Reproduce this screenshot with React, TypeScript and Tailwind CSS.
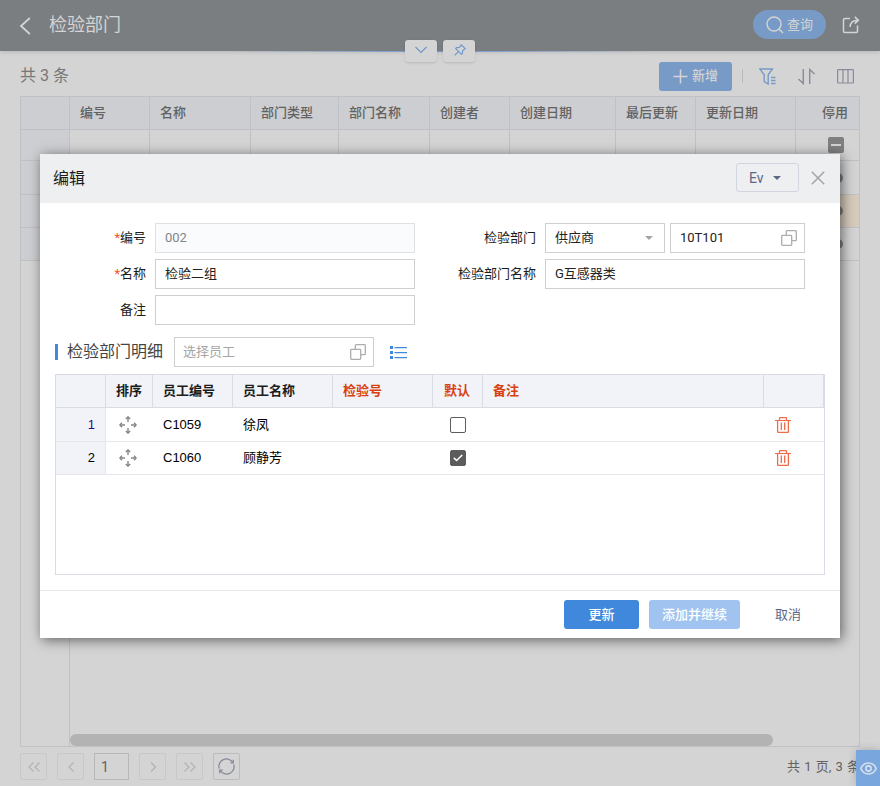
import type { ReactNode } from "react";
import clsx from "clsx";

interface IIconProps {
  className?: string;
}

const listColumns = [
  { title: "", width: "w-[49px]" },
  { title: "编号", width: "w-[80px]" },
  { title: "名称", width: "w-[101px]" },
  { title: "部门类型", width: "w-[88px]" },
  { title: "部门名称", width: "w-[91px]" },
  { title: "创建者", width: "w-[80px]" },
  { title: "创建日期", width: "w-[106px]" },
  { title: "最后更新", width: "w-[80px]" },
  { title: "更新日期", width: "w-[100px]" },
  { title: "停用", width: "w-[63px]" },
];

const listRows = [
  { id: 1, height: "h-[34px]", active: false },
  { id: 2, height: "h-[33px]", active: true },
  { id: 3, height: "h-[33px]", active: false },
];

const employees = [
  { no: 1, code: "C1059", name: "徐凤", checked: false },
  { no: 2, code: "C1060", name: "顾静芳", checked: true },
];

function CopyIcon({ className }: IIconProps) {
  return (
    <svg viewBox="0 0 16 16" fill="none" stroke="#adadad" strokeWidth="1.3" className={clsx("size-4 shrink-0", className)}>
      <rect x="0.7" y="5.3" width="10" height="10" rx="0.8" />
      <path d="M5.3 5V1.5a.8.8 0 0 1 .8-.8h8.4a.8.8 0 0 1 .8.8v8.4a.8.8 0 0 1-.8.8H11" />
    </svg>
  );
}

function TrashIcon() {
  return (
    <svg viewBox="0 0 16 16" fill="none" stroke="#ee6c4b" className="size-4">
      <path d="M0 3.5h16" strokeWidth="1.1" />
      <path d="M4.5 3.5V1.2Q4.5 .6 5.1 .6h5.8q.6 0 .6.6v2.3" strokeWidth="1.2" />
      <path d="M2.6 3.5v11.2q0 .7.7.7h9.4q.7 0 .7-.7V3.5" strokeWidth="1.3" />
      <path d="M6.3 5.5V13M9.7 5.5V13" strokeWidth="1.3" />
    </svg>
  );
}

function MoveIcon() {
  return (
    <svg viewBox="0 0 18 18" fill="none" stroke="#858585" strokeWidth="1.4" className="size-[18px]">
      <path d="M9 1v5M9 12v5M1 9h5M12 9h5" />
      <path d="M6.8 3 9 .9 11.2 3M6.8 15 9 17.1 11.2 15M3 6.8.9 9 3 11.2M15 6.8 17.1 9 15 11.2" />
    </svg>
  );
}

function Checkbox({ checked }: { checked: boolean }) {
  return (
    <span
      className={clsx(
        "flex size-4 items-center justify-center rounded-[2px] border-[1.5px] border-[#5c5c5c]",
        checked ? "bg-[#5c5c5c]" : "bg-white",
      )}
    >
      {checked && (
        <svg viewBox="0 0 10 8" fill="none" stroke="white" strokeWidth="1.6" className="h-2 w-2.5 shrink-0">
          <path d="M.8 3.8 3.6 6.5 9.2 1" />
        </svg>
      )}
    </span>
  );
}

function Field({ label, required, children }: { label: string; required?: boolean; children: ReactNode }) {
  return (
    <div className="flex h-[30px] items-center">
      <label className="w-[82px] text-right text-[13px] text-[#1c1c1c]">
        {required && <span className="text-[#f5512a]">*</span>}
        {label}
      </label>
      <div className="ml-[9px] flex gap-[5px]">{children}</div>
    </div>
  );
}

function Input({ value, width = "w-[260px]", disabled, children }: { value?: string; width?: string; disabled?: boolean; children?: ReactNode }) {
  return (
    <div
      className={clsx(
        "flex h-[30px] items-center justify-between border pr-[7px] pl-[9px] text-[13px]",
        width,
        disabled ? "border-[#dfe1e5] bg-[#fafbfd] text-[#858585]" : "border-[#cfcfcf] bg-white text-[#222]",
      )}
    >
      <span>{value}</span>
      {children}
    </div>
  );
}

function PageButton({ children }: { children: ReactNode }) {
  return (
    <button className="mr-[10px] flex size-[27px] items-center justify-center rounded-[2px] border border-[#c7c8ca] text-[#b1b3b6]">
      <svg viewBox="0 0 14 14" fill="none" stroke="currentColor" strokeWidth="1.3" className="size-3.5">
        {children}
      </svg>
    </button>
  );
}

function PageHeader() {
  return (
    <header className="relative flex h-[51px] items-center bg-[#7a7e81] pr-5 pl-[19px] shadow-[0_1px_4px_rgba(0,0,0,0.15)]">
      <svg viewBox="0 0 12 18" fill="none" stroke="#d4d4d4" strokeWidth="1.8" className="h-[18px] w-3">
        <path d="M10.8 1 2 9l8.800 8" />
      </svg>
      <h1 className="mb-[2px] ml-[18px] text-[18px] text-[#d4d4d4]">检验部门</h1>
      <button className="mb-[2px] ml-auto flex h-[29px] w-[73px] items-center rounded-full bg-[#779bc6] pl-[13px] text-[13px] text-[#d4d4d4]">
        <svg viewBox="0 0 18 18" fill="none" stroke="currentColor" strokeWidth="1.4" className="mr-[3px] size-[18px]">
          <circle cx="8" cy="8" r="7" />
          <path d="m13 13 4 4" />
        </svg>
        查询
      </button>
      <svg viewBox="0 0 18 18" fill="none" stroke="#d4d4d4" strokeWidth="1.5" className="mb-[1px] ml-4 size-[18px]">
        <path d="M8 2.5H2.800q-1.300 0-1.300 1.300v11.400q0 1.300 1.300 1.300h11.400q1.300 0 1.300-1.300V9.500" />
        <path d="M8 11c.3-4 2.500-6.800 8-6.800M12.800.900l3.600 3.300-3.600 3.400" />
      </svg>
      <div className="absolute inset-x-[220px] top-[51px] h-px bg-linear-to-r from-transparent via-[#6f98cc] to-transparent" />
      <div className="absolute top-10 left-[405px] flex gap-1.5">
        <button className="flex h-[22px] w-8 items-center justify-center rounded-[3px] bg-[#d4d4d4] text-[#6f98cc] shadow-sm">
          <svg viewBox="0 0 12 8" fill="none" stroke="currentColor" strokeWidth="1.2" className="mb-0.5 h-2 w-3">
            <path d="m.5 1 5.500 5.500L11.500 1" />
          </svg>
        </button>
        <button className="flex h-[22px] w-8 items-center justify-center rounded-[3px] bg-[#d4d4d4] text-[#6f98cc] shadow-sm">
          <svg viewBox="0 0 12 12" fill="none" stroke="currentColor" strokeWidth="1.2" strokeLinejoin="round" className="mb-0.5 ml-0.5 size-3">
            <path d="M7.300.8 11.200 4.700 10 5.400 8.600 6.800 8.400 9.600 7.400 10.300 1.700 4.600 2.400 3.600 5.200 3.400 6.600 2zM4.400 7.600.6 11.400" />
          </svg>
        </button>
      </div>
    </header>
  );
}

function Toolbar() {
  return (
    <div className="flex h-[45px] items-center pr-[26px] pl-5">
      <span className="mt-1 text-base text-[#777]">共 3 条</span>
      <button className="mt-[5px] ml-auto flex h-[29px] w-[73px] items-center rounded-[3px] bg-[#779bc6] pl-3.5 text-[13px] font-medium text-[#d4d4d4]">
        <svg viewBox="0 0 15 15" stroke="currentColor" strokeWidth="1.5" className="mr-1 size-[15px]">
          <path d="M7.5.5v14M.5 7.5h14" />
        </svg>
        新增
      </button>
      <span className="mt-[5px] ml-[10px] h-3.5 w-px bg-[#b8b9bb]" />
      <svg viewBox="0 0 17 17" fill="none" stroke="#779bc6" strokeWidth="1.4" className="mt-[5px] ml-4 size-[17px]">
        <path d="M.8 1h12.600L9.200 6.800v9.200L5.200 13.500V6.800z" />
        <path d="M12 9.500h4.500M12 12.500h4.500M12 15.500h4.500" />
      </svg>
      <svg viewBox="0 0 17 17" fill="none" stroke="#888c98" strokeWidth="1.4" className="mt-[5px] ml-[22px] size-[17px]">
        <path d="M5.300 1v14.500L.5 11M11.700 16V1.500l4.800 4.500" />
      </svg>
      <svg viewBox="0 0 17 15" fill="none" stroke="#888c98" strokeWidth="1.2" className="mt-[5px] ml-[22px] h-[15px] w-[17px]">
        <rect x=".6" y=".6" width="15.8" height="13.4" rx=".8" />
        <path d="M6 .5V14M11 .5V14" />
      </svg>
    </div>
  );
}

function DepartmentList() {
  return (
    <div className="mx-5 flex h-[651px] flex-col border border-[#c0c1c6]">
      <div className="flex h-[33px] shrink-0 border-b border-[#c0c1c6] bg-[#cdced1] text-[13px] font-medium text-[#626262]">
        {listColumns.map((col, index) => (
          <div
            key={index}
            className={clsx(
              "flex shrink-0 items-center border-[#c0c1c6]",
              col.width,
              col.title === "停用" ? "justify-end pr-[11px]" : "border-r pl-[10px]",
            )}
          >
            {col.title}
          </div>
        ))}
      </div>
      <div className="flex h-[31px] shrink-0 border-b border-[#c0c1c6]">
        {listColumns.map((col, index) => (
          <div
            key={index}
            className={clsx(
              "flex shrink-0 items-center justify-end border-[#c0c1c6]",
              col.width,
              index === 0 && "bg-[#cdced1]",
              index < 9 && "border-r",
            )}
          >
            {index === 9 && (
              <span className="mr-[15px] flex size-4 items-center justify-center rounded-[2px] bg-[#808080]">
                <span className="h-[1.5px] w-2.5 bg-[#d4d4d4]" />
              </span>
            )}
          </div>
        ))}
      </div>
      {listRows.map((row) => (
        <div key={row.id} className={clsx("flex shrink-0 border-b border-[#c0c1c6]", row.height, row.active && "bg-[#d6cbbc]")}>
          <div className="w-[49px] border-r border-[#c0c1c6] bg-[#cdced1]" />
          <div className="mr-4 ml-auto size-2.5 self-center rounded-full bg-[#808080]" />
        </div>
      ))}
      <div className="flex flex-1 items-end">
        <div className="w-[49px] self-stretch border-r border-[#c0c1c6]" />
        <div className="h-3 w-[703px] rounded-full bg-[#b3b3b3]" />
      </div>
    </div>
  );
}

function Pagination() {
  return (
    <footer className="flex h-[39px] items-center px-5 text-[13px] text-[#626262]">
      <PageButton>
        <path d="M6.500 2.500 2 7l4.500 4.500M12.500 2.500 8 7l4.500 4.500" />
      </PageButton>
      <PageButton>
        <path d="M9.500 2.500 5 7l4.500 4.500" />
      </PageButton>
      <div className="mr-[10px] flex h-[27px] w-[35px] items-center border border-[#b7b8ba] pl-1.5 text-sm">1</div>
      <PageButton>
        <path d="m5 2.500 4.500 4.500L5 11.500" />
      </PageButton>
      <PageButton>
        <path d="M1.500 2.500 6 7l-4.500 4.500M7.500 2.500 12 7l-4.500 4.500" />
      </PageButton>
      <button className="flex size-[27px] items-center justify-center rounded-[2px] border border-[#bbbcbe]">
        <svg viewBox="0 0 17 17" fill="none" stroke="#858b98" strokeWidth="1.3" className="size-[17px]">
          <path d="M1.200 10.500A7.500 7.500 0 0 1 14.800 4.500M15.800 6.500A7.500 7.500 0 0 1 2.200 12.500" />
          <path d="M15.300 1.800v3h-3M1.700 15.200v-3h3" />
        </svg>
      </button>
      <span className="ml-auto [word-spacing:1px]">共 1 页, 3 条</span>
    </footer>
  );
}

function DetailTable() {
  return (
    <div className="mx-[15px] mt-[7px] h-[201px] border border-[#d9dbe5]">
      <table className="w-full table-fixed border-separate border-spacing-0 font-['Liberation_Sans','Noto_Sans_CJK_SC',sans-serif] text-[13px]">
        <colgroup>
          <col className="w-[50px]" />
          <col className="w-[47px]" />
          <col className="w-[80px]" />
          <col className="w-[100px]" />
          <col className="w-[100px]" />
          <col className="w-[50px]" />
          <col className="w-[281px]" />
          <col className="w-[60px]" />
        </colgroup>
        <thead>
          <tr className="h-[33px] bg-[#f2f3f8] text-left text-[#1c1c1c] *:border-r *:border-b *:border-[#d9dbe5] *:pl-[10px] *:font-bold">
            <th />
            <th>排序</th>
            <th>员工编号</th>
            <th>员工名称</th>
            <th className="text-[#d9400f]">检验号</th>
            <th className="text-[#d9400f]">
              <span className="ml-px">默认</span>
            </th>
            <th className="text-[#d9400f]">备注</th>
            <th />
          </tr>
        </thead>
        <tbody>
          {employees.map((item) => (
            <tr key={item.no} className={clsx("text-black *:border-b *:border-[#e6e7ea]", item.checked ? "h-[33px]" : "h-[34px]")}>
              <td className="border-r bg-[#f2f3f8] pr-[10px] text-right">
                <span className={clsx(!item.checked && "text-[#2a0a8a]")}>{item.no}</span>
              </td>
              <td className="pl-[13px]">
                <MoveIcon />
              </td>
              <td className="pl-[10px]">{item.code}</td>
              <td className="pl-[10px]">{item.name}</td>
              <td />
              <td className="pl-[17px]">
                <Checkbox checked={item.checked} />
              </td>
              <td />
              <td className="pl-[11px]">
                <TrashIcon />
              </td>
            </tr>
          ))}
        </tbody>
      </table>
    </div>
  );
}

function EditDialog() {
  return (
    <section className="absolute top-[154px] left-10 flex h-[484px] w-[800px] flex-col bg-white shadow-[2px_2px_12px_rgba(0,0,0,0.55)]">
      <div className="flex h-[49px] shrink-0 items-center bg-[#eeeff1] pr-[15px] pl-[13px]">
        <h2 className="text-base text-[#1c1c1c]">编辑</h2>
        <button className="mb-[2px] ml-auto flex h-[29px] w-[63px] items-center rounded-[3px] border border-[#d2d5e0] pl-3 text-sm text-[#5b6786]">
          Ev
          <span className="ml-[9px] border-x-4 border-t-4 border-x-transparent border-t-[#5b6786]" />
        </button>
        <svg viewBox="0 0 14 14" stroke="#a5a6a8" strokeWidth="1.6" className="mb-px ml-3 size-3.5">
          <path d="m.8.8 12.400 12.400M13.200.8.800 13.200" />
        </svg>
      </div>
      <div className="mt-5 flex pl-6">
        <div className="flex w-[390px] flex-col gap-1.5">
          <Field label="编号" required>
            <Input value="002" disabled />
          </Field>
          <Field label="名称" required>
            <Input value="检验二组" />
          </Field>
          <Field label="备注">
            <Input />
          </Field>
        </div>
        <div className="flex flex-col gap-1.5">
          <Field label="检验部门">
            <Input value="供应商" width="w-[120px]">
              <span className="mr-1 border-x-4 border-t-4 border-x-transparent border-t-[#a5a5a5]" />
            </Input>
            <Input value="10T101" width="w-[135px]">
              <CopyIcon />
            </Input>
          </Field>
          <Field label="检验部门名称">
            <Input value="G互感器类" />
          </Field>
        </div>
      </div>
      <div className="mt-3 flex h-[30px] items-center pl-[15px]">
        <span className="h-4 w-[3px] bg-[#4088dc]" />
        <h3 className="ml-[9px] w-[107px] text-base text-[#444]">检验部门明细</h3>
        <div className="flex h-[30px] w-[200px] items-center justify-between border border-[#cfcfcf] pr-[7px] pl-2 text-[13px] text-[#a5a5a5]">
          选择员工
          <CopyIcon />
        </div>
        <svg viewBox="0 0 17 13" fill="#4088dc" className="ml-4 h-[13px] w-[17px]">
          <path d="M0 0h3v3H0zM0 5h3v3H0zM0 10h3v3H0zM4.500 1H17v1.300H4.500zM4.500 6H17v1.300H4.500zM4.500 11H17v1.300H4.500z" />
        </svg>
      </div>
      <DetailTable />
      <div className="mt-auto flex h-12 items-center border-t border-[#e6e7ea] pl-[524px] text-[13px]">
        <button className="h-[29px] w-[75px] rounded-[3px] bg-[#4088dc] font-medium text-white">更新</button>
        <button className="ml-[10px] h-[29px] w-[91px] rounded-[3px] bg-[#a0c4ef] font-medium text-white">添加并继续</button>
        <button className="ml-[35px] text-[#5b6786]">取消</button>
      </div>
    </section>
  );
}

export default function App() {
  return (
    <div className="relative h-[786px] w-[880px] overflow-hidden bg-[#d4d4d4] font-['Roboto','Noto_Sans_CJK_SC',sans-serif]">
      <PageHeader />
      <Toolbar />
      <DepartmentList />
      <Pagination />
      <EditDialog />
      <div className="absolute right-0 bottom-0 flex h-9 w-6 items-center justify-center bg-[#79a6dc] shadow-[0_0_8px_rgba(0,0,0,0.2)]">
        <svg viewBox="0 0 17 13" fill="none" stroke="#d9e0ea" strokeWidth="1.6" className="h-[13px] w-[17px]">
          <path d="M.8 6.500C4 -.8 13 -.8 16.200 6.500 13 13.800 4 13.800.8 6.500z" />
          <circle cx="8.5" cy="6.5" r="2.6" />
        </svg>
      </div>
    </div>
  );
}
